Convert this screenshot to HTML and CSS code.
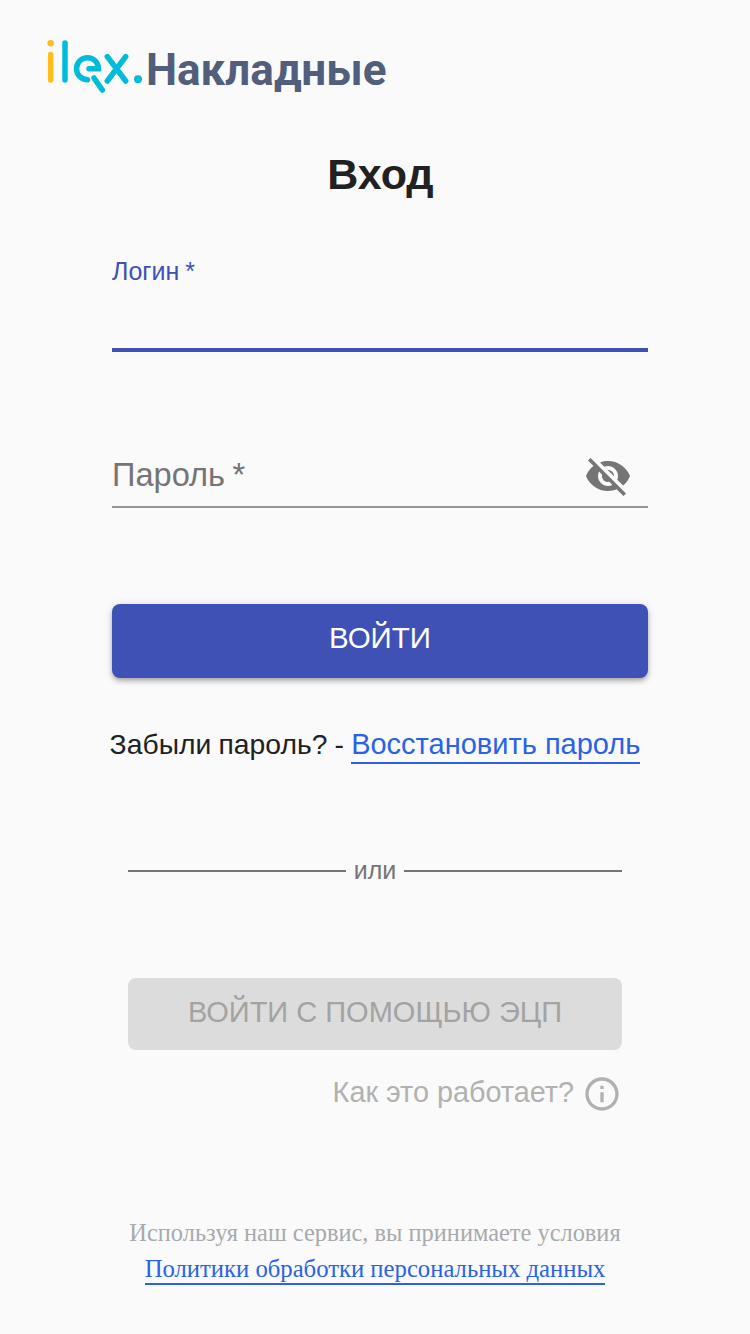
FILE: index.html
```html
<!DOCTYPE html>
<html lang="ru">
<head>
    <meta charset="UTF-8">
    <meta name="viewport" content="width=device-width, initial-scale=1.0">
    <title>Вход</title>
    <link rel="stylesheet" href="styles.css">
</head>
<body>
    <div class="container">
        <!-- Logo -->
        <header class="header">
            <svg class="logo" width="100" height="56" viewBox="0 0 100 56" fill="none" stroke-linecap="round" stroke-width="5.5">
                <circle cx="4.7" cy="5.3" r="3.3" fill="#fdbe1b"></circle>
                <path d="M4.7 16.5V42" stroke="#fdbe1b"></path>
                <path d="M19 5V42" stroke="#00bcd9"></path>
                <path d="M43 30.7H52.5A11 11 0 1 0 41.5 41.7M48 40L56.3 52" stroke="#00bcd9"></path>
                <path d="M61.3 18.7L79.7 43M79.7 18.7L61.3 43" stroke="#00bcd9"></path>
                <circle cx="92" cy="41.3" r="4" fill="#00bcd9"></circle>
            </svg>
            <span class="app-name">Накладные</span>
        </header>

        <h1 class="title">Вход</h1>

        <!-- Login form -->
        <form class="form">
            <div class="field field-active">
                <label class="field-label">Логин *</label>
            </div>
            <div class="field field-password">
                <span class="field-placeholder">Пароль *</span>
                <svg class="eye-icon" width="48" height="48" viewBox="0 0 24 24" fill="#757575">
                    <path d="M12 7c2.76 0 5 2.24 5 5 0 .65-.13 1.26-.36 1.83l2.92 2.92c1.51-1.26 2.7-2.89 3.43-4.75-1.73-4.39-6-7.5-11-7.5-1.4 0-2.74.25-3.98.7l2.16 2.16C10.74 7.13 11.35 7 12 7zM2 4.27l2.28 2.28.46.46C3.08 8.3 1.78 10.02 1 12c1.73 4.39 6 7.5 11 7.5 1.55 0 3.03-.3 4.38-.84l.42.42L19.73 22 21 20.73 3.27 3 2 4.27zM7.53 9.8l1.55 1.55c-.05.21-.08.43-.08.65 0 1.66 1.34 3 3 3 .22 0 .44-.03.65-.08l1.55 1.55c-.67.33-1.41.53-2.2.53-2.76 0-5-2.24-5-5 0-.79.2-1.53.53-2.2zm4.31-.78l3.15 3.15.02-.16c0-1.66-1.34-3-3-3l-.17.01z"></path>
                </svg>
            </div>
            <button type="button" class="login-button">ВОЙТИ</button>
            <p class="forgot">Забыли пароль? - <a class="link" href="#">Восстановить пароль</a></p>
        </form>

        <div class="divider"><span>или</span></div>

        <!-- Signature login -->
        <div class="ecp">
            <button type="button" class="ecp-button" disabled>ВОЙТИ С ПОМОЩЬЮ ЭЦП</button>
            <div class="how">
                <span class="how-text">Как это работает?</span>
                <svg width="40" height="40" viewBox="0 0 24 24" fill="#b1b1b1">
                    <path d="M11 7h2v2h-2zm0 4h2v6h-2zm1-9C6.48 2 2 6.48 2 12s4.48 10 10 10 10-4.48 10-10S17.52 2 12 2zm0 18c-4.41 0-8-3.59-8-8s3.59-8 8-8 8 3.59 8 8-3.59 8-8 8z"></path>
                </svg>
            </div>
        </div>

        <footer class="footer">
            <p>Используя наш сервис, вы принимаете условия</p>
            <a class="link" href="#">Политики обработки персональных данных</a>
        </footer>
    </div>
</body>
</html>
```

FILE: styles.css
```css
* {
    margin: 0;
    padding: 0;
    box-sizing: border-box;
    font-family: "Liberation Sans", Arial, sans-serif;
}

body {
    background-color: #fafafa;
    min-height: 100vh;
}

.container {
    width: 750px;
    height: 1334px;
    overflow: hidden;
}

/* Header */
.header {
    display: flex;
    align-items: flex-start;
    padding: 38px 0 0 46px;
    height: 145px;
}

.app-name {
    font-family: Roboto, sans-serif;
    font-size: 44px;
    font-weight: 700;
    line-height: 56px;
    margin: 4px 0 0 0;
    color: #515e7c;
}

.title {
    height: 59px;
    font-size: 43px;
    line-height: 58px;
    font-weight: 700;
    text-align: center;
    margin-left: 11px;
    color: #212121;
}

/* Form */
.form {
    width: 536px;
    margin-left: 112px;
}

.field {
    border-bottom: 2px solid #949494;
}

.field-active {
    height: 148px;
    padding-top: 53px;
    border-bottom: 4px solid #3f51b5;
}

.field-label {
    display: block;
    font-size: 25px;
    line-height: 28px;
    word-spacing: -1px;
    color: #3f51b5;
}

.field-password {
    display: flex;
    align-items: center;
    justify-content: space-between;
    height: 156px;
    padding: 96px 16px 0 0;
}

.field-placeholder {
    font-size: 32.6px;
    word-spacing: -1.5px;
    margin-bottom: 4px;
    color: #757575;
}

.eye-icon {
    margin-bottom: 2px;
}

.login-button {
    display: block;
    width: 100%;
    height: 74px;
    margin-top: 96px;
    padding-bottom: 7px;
    border: none;
    border-radius: 8px;
    background-color: #3f51b5;
    color: white;
    font-size: 29.5px;
    box-shadow: 0 2px 4px -1px rgba(0, 0, 0, 0.2), 0 4px 5px 0 rgba(0, 0, 0, 0.14), 0 1px 10px 0 rgba(0, 0, 0, 0.12);
}

.forgot {
    margin: 47px 0 1px -10px;
    font-size: 28.3px;
    word-spacing: -0.7px;
    line-height: 38px;
    white-space: nowrap;
    text-align: center;
    color: #212121;
}

.link {
    color: #2962e8;
    text-decoration: none;
    padding-bottom: 2px;
    border-bottom: 2px solid #2962e8;
}

.forgot .link {
    font-size: 29px;
    word-spacing: 0;
}

/* Divider */
.divider {
    display: flex;
    align-items: center;
    gap: 8px;
    width: 494px;
    margin: 93px auto 0;
    font-size: 25px;
    color: #757575;
}

.divider::before,
.divider::after {
    content: "";
    flex: 1;
    height: 2px;
    background-color: #757575;
}

/* Signature */
.ecp {
    width: 494px;
    margin: 93px auto 0;
}

.ecp-button {
    display: block;
    width: 100%;
    height: 72px;
    padding-bottom: 3px;
    border: none;
    border-radius: 8px;
    background-color: #dcdcdc;
    color: #a3a3a3;
    font-size: 29px;
}

.how {
    display: flex;
    align-items: center;
    justify-content: flex-end;
    gap: 8px;
    margin-top: 24px;
    font-size: 28.8px;
    color: #b1b1b1;
}

.how-text {
    margin-bottom: 4px;
}

/* Footer */
.footer {
    margin-top: 101px;
    text-align: center;
    font-size: 24.4px;
    line-height: 36px;
    color: #a8aaad;
}

.footer,
.footer .link,
.footer p {
    font-family: "Liberation Serif", "Times New Roman", serif;
}

.footer .link {
    font-size: 24.7px;
    padding-bottom: 1px;
}
```
